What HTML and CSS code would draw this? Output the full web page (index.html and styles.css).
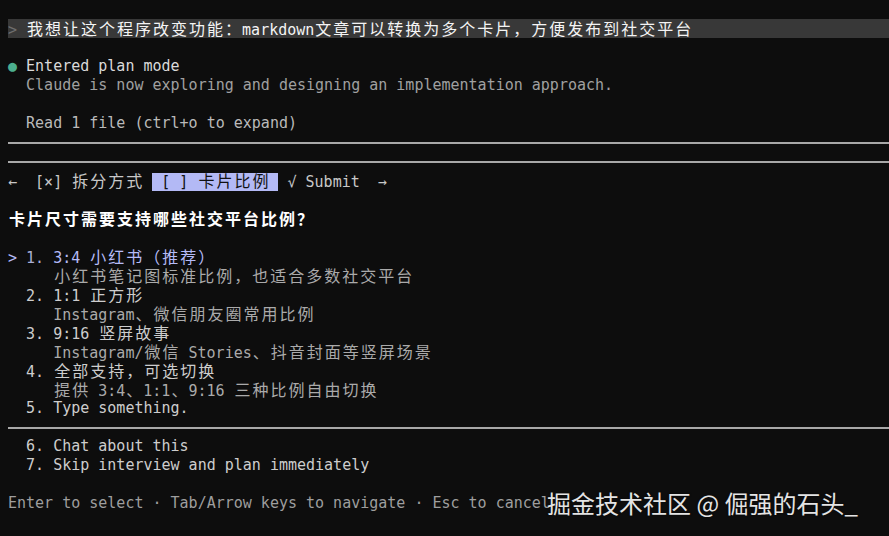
FILE: index.html
```html
<!DOCTYPE html>
<html lang="zh">
<head>
<meta charset="utf-8">
<title>Terminal</title>
<link rel="stylesheet" href="styles.css">
</head>
<body>
<main class="term">
  <div class="row prompt"><span class="dim2">&gt;</span> <span class="c">我想让这个程序改变功能：</span>markdown<span class="c">文章可以转换为多个卡片，方便发布到社交平台</span></div>
  <div class="row"></div>
  <div class="row"><span class="dot">●</span> <span class="bright">Entered plan mode</span></div>
  <div class="row dim">  Claude is now exploring and designing an implementation approach.</div>
  <div class="row"></div>
  <div class="row mid">  Read 1 file (ctrl+o to expand)</div>
  <div class="row rule"><div class="line"></div></div>
  <div class="row rule"><div class="line"></div></div>
  <div class="row tabs"><span class="mid">←  [×] <span class="c">拆分方式</span> </span><span class="active"> [ ] <span class="c">卡片比例</span> </span><span class="mid"> √ Submit  →</span></div>
  <div class="row"></div>
  <div class="row question"><span class="c">卡片尺寸需要支持哪些社交平台比例？</span></div>
  <div class="row"></div>
  <div class="row sel">&gt; <span class="selnum">1.</span> 3:4 <span class="c">小红书（推荐）</span></div>
  <div class="row desc">     <span class="c">小红书笔记图标准比例，也适合多数社交平台</span></div>
  <div class="row opt">  2. 1:1 <span class="c">正方形</span></div>
  <div class="row desc">     Instagram<span class="c">、微信朋友圈常用比例</span></div>
  <div class="row opt">  3. 9:16 <span class="c">竖屏故事</span></div>
  <div class="row desc">     Instagram/<span class="c">微信</span> Stories<span class="c">、抖音封面等竖屏场景</span></div>
  <div class="row opt">  4. <span class="c">全部支持，可选切换</span></div>
  <div class="row desc">     <span class="c">提供</span> 3:4<span class="c">、</span>1:1<span class="c">、</span>9:16 <span class="c">三种比例自由切换</span></div>
  <div class="row opt">  5. Type something.</div>
  <div class="row rule"><div class="line"></div></div>
  <div class="row opt">  6. Chat about this</div>
  <div class="row opt">  7. Skip interview and plan immediately</div>
  <div class="row"></div>
  <div class="row footer">Enter to select · Tab/Arrow keys to navigate · Esc to cancel</div>
</main>
<div class="watermark">掘金技术社区 @ 倔强的石头_</div>
</body>
</html>
```
FILE: styles.css
```css
html, body {
  margin: 0;
  padding: 0;
  background: #0d0d0d;
  overflow: hidden;
}
body {
  width: 889px;
  height: 536px;
  position: relative;
}
.term {
  padding: 19px 0 0 8px;
  font-family: "DejaVu Sans Mono", "Noto Sans CJK SC", monospace;
  font-size: 15px;
  color: #cccccc;
}
.row {
  height: 19px;
  line-height: 19px;
  white-space: pre;
  overflow: visible;
}
.c {
  font-family: "Noto Sans CJK SC", "Noto Sans CJK JP", sans-serif;
  font-size: 16px;
  line-height: 19px;
  letter-spacing: 2px;
  margin-left: 1px;
  margin-right: -1px;
}
.prompt {
  background: #383838;
  color: #f4f4f4;
}
.dim2 { color: #6e6e6e; }
.dot { color: #4caf8e; }
.bright { color: #dadada; }
.dim { color: #a0a0a0; }
.mid { color: #bababa; }
.rule {
  box-sizing: border-box;
  padding-top: 9px;
}
.rule .line {
  height: 2px;
  background: #a8a8a8;
}
.tabs .mid { color: #c8c8c8; }
.active {
  background: #b3b9f5;
  color: #111111;
}
.question {
  color: #ffffff;
  font-weight: bold;
}
.sel { color: #b5bbf7; }
.selnum { color: #a9aed6; }
.desc { color: #aaaaaa; }
.opt { color: #cdcdcd; }
.footer { color: #9e9e9e; }
.watermark {
  position: absolute;
  left: 547px;
  top: 488px;
  font-family: "Noto Sans CJK SC", sans-serif;
  font-size: 24px;
  line-height: 30px;
  color: #e4e4e4;
  white-space: pre;
  text-shadow: 0 0 2px rgba(0,0,0,0.6);
}
```
